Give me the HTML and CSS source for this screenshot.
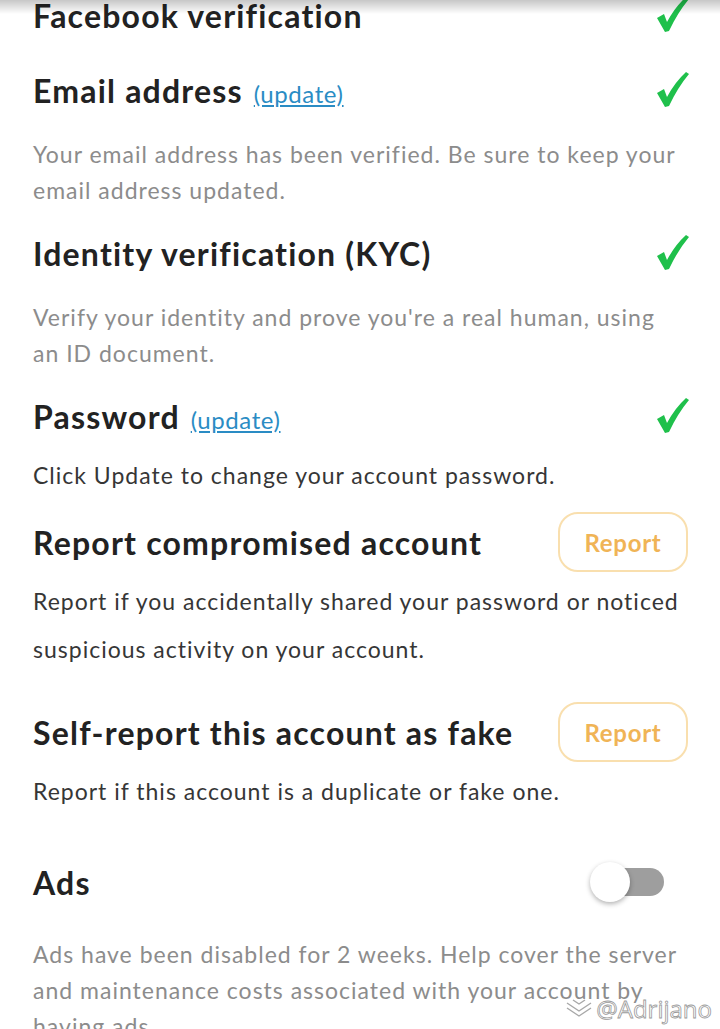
FILE: index.html
```html
<!DOCTYPE html>
<html lang="en">
<head>
    <meta charset="utf-8">
    <title>Account settings</title>
    <link rel="stylesheet" href="styles.css">
</head>
<body>
    <div class="top-shade"></div>
    <div class="page">
        <div class="item">
            <div class="item-head">
                <h3>Facebook verification</h3>
                <svg class="check" viewBox="0 0 36 38"><path d="M2 22 L9 18 L12 26 Q20 11 31 1 L34 3 Q23 16 14 35 L10 36 Z"/></svg>
            </div>
        </div>

        <div class="item">
            <div class="item-head">
                <h3>Email address <a href="#" class="update">(update)</a></h3>
                <svg class="check" viewBox="0 0 36 38"><path d="M2 22 L9 18 L12 26 Q20 11 31 1 L34 3 Q23 16 14 35 L10 36 Z"/></svg>
            </div>
            <p class="desc muted">Your email address has been verified. Be sure to keep your email address updated.</p>
        </div>

        <div class="item">
            <div class="item-head">
                <h3>Identity verification (KYC)</h3>
                <svg class="check" viewBox="0 0 36 38"><path d="M2 22 L9 18 L12 26 Q20 11 31 1 L34 3 Q23 16 14 35 L10 36 Z"/></svg>
            </div>
            <p class="desc muted">Verify your identity and prove you're a real human, using an ID document.</p>
        </div>

        <div class="item item-password">
            <div class="item-head">
                <h3>Password <a href="#" class="update">(update)</a></h3>
                <svg class="check" viewBox="0 0 36 38"><path d="M2 22 L9 18 L12 26 Q20 11 31 1 L34 3 Q23 16 14 35 L10 36 Z"/></svg>
            </div>
            <p class="desc near">Click Update to change your account password.</p>
        </div>

        <div class="item item-report">
            <div class="item-head">
                <h3>Report compromised account</h3>
                <button type="button" class="report-btn">Report</button>
            </div>
            <p class="desc spaced">Report if you accidentally shared your password or noticed suspicious activity on your account.</p>
        </div>

        <div class="item item-fake">
            <div class="item-head">
                <h3>Self-report this account as fake</h3>
                <button type="button" class="report-btn">Report</button>
            </div>
            <p class="desc near">Report if this account is a duplicate or fake one.</p>
        </div>

        <div class="item">
            <div class="item-head">
                <h3>Ads</h3>
                <div class="toggle"><span class="knob"></span></div>
            </div>
            <p class="desc muted ads-desc">Ads have been disabled for 2 weeks. Help cover the server and maintenance costs associated with your account by having ads.</p>
        </div>
    </div>

    <div class="watermark">
        <svg viewBox="0 0 30 24"><path d="M3 6 L15 14 L27 6 M3 11 L15 19 L27 11 M9 3 L15 7 L21 3"/></svg>
        <span>@Adrijano</span>
    </div>
</body>
</html>
```

FILE: styles.css
```css
body {
    margin: 0;
    font-family: Lato, "Open Sans", sans-serif;
    background: #fff;
    color: #222;
    overflow: hidden;
}

.top-shade {
    position: absolute;
    top: 0;
    left: 0;
    right: 0;
    height: 14px;
    background: linear-gradient(rgba(0, 0, 0, 0.22), rgba(0, 0, 0, 0));
    z-index: 2;
}

.page {
    margin-top: -15px;
    padding: 0 32px 0 33px;
}

.item {
    padding-bottom: 15px;
}

.item-head {
    display: flex;
    align-items: center;
    justify-content: space-between;
    height: 60px;
}

h3 {
    margin: 0;
    font-size: 32px;
    font-weight: 700;
    color: #222;
    letter-spacing: 1.2px;
}

.update {
    font-size: 24px;
    font-weight: 400;
    color: #2a8cc4;
    text-decoration: underline;
    letter-spacing: 0.6px;
    margin-left: 2px;
}

.check {
    width: 36px;
    height: 38px;
    margin-right: -3px;
    fill: #1fc04b;
}

.desc {
    margin: 16px 0 0;
    padding-right: 8px;
    font-size: 23px;
    line-height: 36px;
    color: #363636;
    letter-spacing: 1px;
}

.desc.muted {
    color: #8c8c8c;
}

.desc.near {
    margin-top: 11px;
}

.desc.spaced {
    margin-top: 5px;
    line-height: 48px;
}

.item-password {
    padding-bottom: 19px;
}

.item-report {
    padding-bottom: 29px;
}

.item-fake {
    padding-bottom: 43px;
}

.ads-desc {
    margin-top: 24px;
}

.report-btn {
    width: 130px;
    height: 60px;
    border: 2px solid #f9dfae;
    border-radius: 20px;
    background: #fff;
    color: #f0b456;
    font-family: Lato, sans-serif;
    font-size: 24px;
    font-weight: 700;
    letter-spacing: 0.7px;
    cursor: pointer;
}

.toggle {
    position: relative;
    width: 68px;
    height: 28px;
    margin-right: 24px;
    border-radius: 14px;
    background: #9e9e9e;
}

.knob {
    position: absolute;
    left: -6px;
    top: -6px;
    width: 40px;
    height: 40px;
    border-radius: 50%;
    background: #fff;
    box-shadow: 0 2px 5px rgba(0, 0, 0, 0.3);
}

.watermark {
    position: absolute;
    right: 8px;
    top: 992px;
    display: flex;
    align-items: center;
    gap: 2px;
    font-family: "Open Sans", sans-serif;
    font-size: 24px;
    color: #fff;
    -webkit-text-stroke: 0.8px #9a9a9a;
}

.watermark svg {
    width: 30px;
    height: 24px;
    fill: none;
    stroke: #a8a8a8;
    stroke-width: 1.4;
}
```
